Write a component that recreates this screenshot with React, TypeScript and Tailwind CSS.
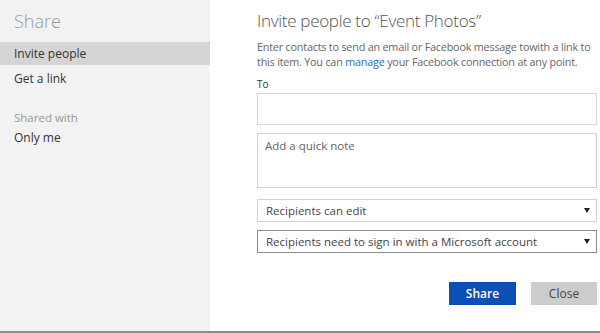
import React from 'react';

const Caret = () => (
  <svg width="6" height="5" viewBox="0 0 6 5" className="shrink-0">
    <path d="M0 0 H6 L3 5 Z" fill="#222" />
  </svg>
);

const App: React.FC = () => {
  return (
    <div
      className="w-[600px] h-[333px] flex flex-col bg-white overflow-hidden"
      style={{ fontFamily: '"Open Sans", "Noto Sans", sans-serif' }}
    >
      <div className="flex flex-1 min-h-0">
        <aside className="w-[210px] shrink-0 bg-[#f2f2f2] flex flex-col">
          <h1 className="px-[14px] pt-[8px] h-[42px] text-[18px] font-light text-[#999] leading-[26px]">Share</h1>
          <div className="h-[23px] bg-[#d5d5d5] px-[14px] text-[12px] leading-[23px] text-[#333]">Invite people</div>
          <div className="h-[26px] px-[14px] text-[12px] leading-[27px] text-[#333]">Get a link</div>
          <div className="mt-[18px] px-[14px] text-[11.5px] leading-[18px] text-[#999]">Shared with</div>
          <div className="mt-[1px] px-[14px] text-[12px] leading-[20px] text-[#333]">Only me</div>
        </aside>
        <main className="w-[390px] min-w-0 pl-[47px] pr-[3px] pt-[8px] flex flex-col">
          <h2 className="text-[17px] font-light text-[#555] leading-[26px] tracking-[-0.3px] whitespace-nowrap">
            Invite people to “Event Photos”
          </h2>
          <p className="mt-[5px] text-[10.8px] leading-[15px] text-[#666] tracking-[-0.2px] whitespace-nowrap">
            Enter contacts to send an email or Facebook message towith a link to
            <br />
            this item. You can <span className="text-[#2a6ebb]">manage</span> your Facebook connection at any point.
          </p>
          <div className="mt-[9px] text-[10px] leading-[12px] text-[#333]">To</div>
          <div className="mt-[3px] h-[32px] border border-[#d8d8d8] bg-white" />
          <div className="mt-[8px] h-[55px] border border-[#d0d0d0] bg-white px-[7px] pt-[4px] text-[11.5px] leading-[16px] text-[#666]">
            Add a quick note
          </div>
          <div className="mt-[11px] h-[23px] border border-[#d0d0d0] bg-white flex items-center justify-between pl-[8px] pr-[6px] text-[11.5px] text-[#444]">
            <span>Recipients can edit</span>
            <Caret />
          </div>
          <div className="mt-[8px] h-[23px] border border-[#8a8a8a] bg-white flex items-center justify-between pl-[8px] pr-[6px] text-[11.5px] text-[#444]">
            <span>Recipients need to sign in with a Microsoft account</span>
            <Caret />
          </div>
          <div className="mt-[29px] flex justify-end gap-[15px]">
            <button className="w-[67px] h-[23px] bg-[#0b4fb7] text-white text-[12px] font-semibold">Share</button>
            <button className="w-[66px] h-[23px] bg-[#cccccc] text-[#444] text-[12px]">Close</button>
          </div>
        </main>
      </div>
      <div className="h-[2px] bg-[#8c8c8c] shrink-0" />
    </div>
  );
};

export default App;
